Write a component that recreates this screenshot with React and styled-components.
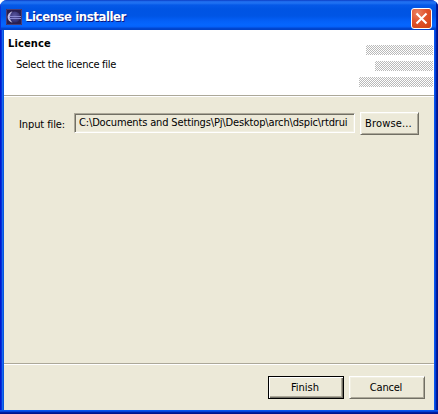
import React from 'react';
import styled, { createGlobalStyle } from 'styled-components';

const GlobalStyle = createGlobalStyle`
  * { box-sizing: border-box; }
  body {
    margin: 0;
    overflow: hidden;
    background: #fff;
    color: #000;
    font: 11px/14px "DejaVu Sans Condensed", "DejaVu Sans", Tahoma, sans-serif;
    font-stretch: condensed;
  }
`;

const Window = styled.div`
  width: 438px;
  height: 414px;
  display: flex;
  flex-direction: column;
  overflow: hidden;
  border-radius: 7px 7px 0 0;
  background: #0842e0;
`;

const TitleBar = styled.header`
  height: 30px;
  flex: none;
  display: flex;
  align-items: center;
  gap: 3px;
  padding: 4px 6px 1px 6px;
  background: linear-gradient(
    180deg,
    #0831b8 0px, #1c66ea 1px, #2173f3 3px, #0659e8 5px, #0054e3 9px,
    #0055e5 16px, #0460f8 21px, #0566ff 25px, #0560f8 27px, #0148d4 28px, #0040c4 30px
  );
  box-shadow: inset 1px 0 0 #0831d9, inset -1px 0 0 #00138c, inset -2px 0 0 #001ea0;
`;

const Title = styled.h1`
  margin: 0;
  flex: 1;
  color: #fff;
  font-size: 13px;
  line-height: 16px;
  font-weight: bold;
  letter-spacing: -0.42px;
  text-shadow: 1px 1px 0 #0a1883;
  white-space: nowrap;
`;

const CloseButton = styled.button`
  width: 21px;
  height: 21px;
  margin: 3px 0 0;
  padding: 0;
  display: flex;
  align-items: center;
  justify-content: center;
  border: 1px solid #fff;
  border-radius: 3px;
  background: radial-gradient(circle at 30% 20%, #ea8263 0, #e0522c 45%, #d0400f 100%);
`;

const Frame = styled.div`
  flex: 1;
  min-height: 0;
  display: flex;
  padding: 0 4px 4px;
  background:
    linear-gradient(0deg, #00138c 0 1px, #001ea0 1px 2px, #0441d8 2px 3px, #0855ee 3px 4px) bottom / 100% 4px no-repeat,
    linear-gradient(90deg, #0019cf 0 1px, #0831d9 1px 2px, #166aee 2px 3px, #0855dd 3px 4px) left / 4px 100% no-repeat,
    linear-gradient(270deg, #00138c 0 1px, #001ea0 1px 2px, #0441d8 2px 3px, #0855ee 3px 4px) right / 4px 100% no-repeat;
`;

const Dialog = styled.main`
  flex: 1;
  min-width: 0;
  display: flex;
  flex-direction: column;
  background: #ece9d8;
`;

const Banner = styled.section`
  height: 65px;
  flex: none;
  display: flex;
  justify-content: space-between;
  padding: 7px 1px 0 4px;
  background: #fff;
`;

const Heading = styled.h2`
  margin: 0;
  font-size: 11px;
  line-height: 14px;
  letter-spacing: 0.12px;
`;

const Description = styled.p`
  margin: 7px 0 0 8px;
  letter-spacing: -0.26px;
`;

const Bars = styled.div`
  display: flex;
  flex-direction: column;
  align-items: flex-end;
  gap: 6px;
  padding-top: 8px;
`;

const Bar = styled.div`
  width: ${(p) => p.$width}px;
  height: 10px;
  background: repeating-conic-gradient(#b9b9b9 0 25%, #fff 0 50%) 0 0 / 2px 2px;
`;

const Rule = styled.div`
  height: 2px;
  flex: none;
  border-top: 1px solid #aca899;
  border-bottom: 1px solid #fff;
`;

const Form = styled.section`
  flex: 1;
  display: flex;
  align-items: flex-start;
  padding: 15px 15px 0 15px;
`;

const Label = styled.label`
  width: 55px;
  padding-top: 6px;
  white-space: nowrap;
  letter-spacing: -0.1px;
`;

const Field = styled.div`
  width: 281px;
  height: 20px;
  margin: 1px 5px 0 0;
  padding: 2px 0 0 4px;
  overflow: hidden;
  white-space: nowrap;
  border: 1px solid;
  border-color: #aca899 #fff #fff #aca899;
  box-shadow: inset 1px 1px 0 #716f64, inset -1px -1px 0 #f1efe2;
  letter-spacing: -0.15px;
`;

const Button = styled.button`
  width: ${(p) => p.$width}px;
  height: 23px;
  padding: 0 2px 0 0;
  font: inherit;
  color: #000;
  letter-spacing: ${(p) => p.$spacing || '0px'};
  background: #ece9d8;
  border: 1px solid;
  border-color: ${(p) => (p.$primary ? '#000' : '#fff #716f64 #716f64 #fff')};
  box-shadow: ${(p) =>
    p.$primary
      ? 'inset 1px 1px 0 #fff, inset -1px -1px 0 #716f64, inset -2px -2px 0 #aca899'
      : 'inset 1px 1px 0 #f1efe2, inset -1px -1px 0 #aca899'};
`;

const Footer = styled.footer`
  height: 45px;
  flex: none;
  display: flex;
  justify-content: flex-end;
  gap: 5px;
  padding: 11px 9px 0 0;
`;

function EclipseIcon() {
  return (
    <svg width="16" height="16" viewBox="0 0 16 16">
      <defs>
        <radialGradient id="orb" cx="0.5" cy="0.4" r="0.7">
          <stop offset="0" stopColor="#5d5aa0" />
          <stop offset="1" stopColor="#252164" />
        </radialGradient>
      </defs>
      <rect width="16" height="16" fill="#2a1f4e" />
      <path d="M.5 15.5V.5h15v15z" fill="none" stroke="#4b3c72" />
      <circle cx="8.7" cy="8" r="5.5" fill="url(#orb)" />
      <path d="M6.5 2.2Q1.6 4 1.6 8t4.9 5.8Q3.8 11 3.8 8t2.7-5.8" fill="#c1bde5" />
      <path d="M3 7.5h12M3 9.5h12" stroke="#8f8fd6" strokeWidth="0.9" />
    </svg>
  );
}

function CloseIcon() {
  return (
    <svg width="13" height="13" viewBox="0 0 13 13">
      <path d="M1.5 1.5l10 10M11.5 1.5l-10 10" stroke="#fff" strokeWidth="2.1" />
    </svg>
  );
}

export default function App() {
  return (
    <>
      <GlobalStyle />
      <Window>
        <TitleBar>
          <EclipseIcon />
          <Title>License installer</Title>
          <CloseButton aria-label="Close"><CloseIcon /></CloseButton>
        </TitleBar>
        <Frame>
          <Dialog>
            <Banner>
              <div>
                <Heading>Licence</Heading>
                <Description>Select the licence file</Description>
              </div>
              <Bars>
                <Bar $width={67} />
                <Bar $width={58} />
                <Bar $width={74} />
              </Bars>
            </Banner>
            <Rule />
            <Form>
              <Label>Input file:</Label>
              <Field>C:\Documents and Settings\Pj\Desktop\arch\dspic\rtdrui</Field>
              <Button $width={59} $spacing="0.15px">Browse...</Button>
            </Form>
            <Rule />
            <Footer>
              <Button $width={76} $primary>Finish</Button>
              <Button $width={76} $spacing="-0.2px">Cancel</Button>
            </Footer>
          </Dialog>
        </Frame>
      </Window>
    </>
  );
}
